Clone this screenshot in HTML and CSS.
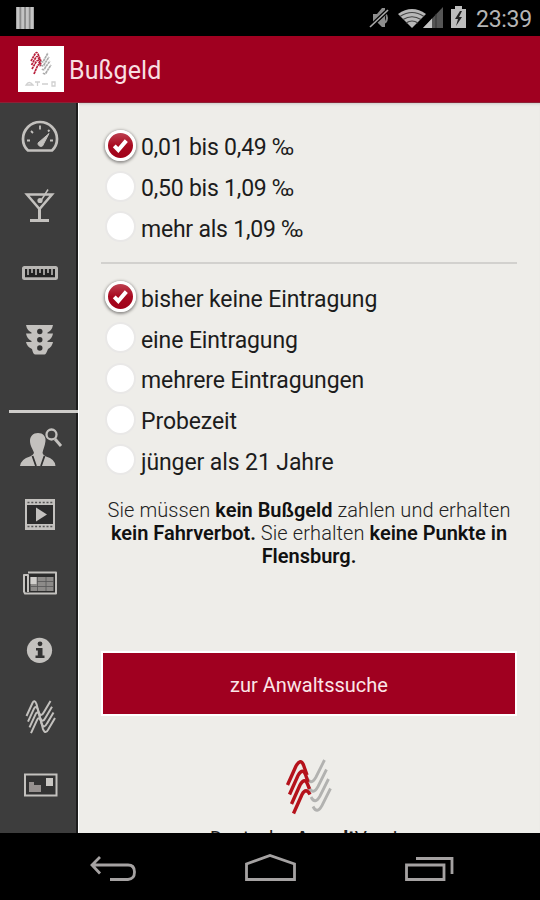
FILE: index.html
```html
<!DOCTYPE html>
<html lang="de">
<head>
    <meta charset="UTF-8">
    <meta name="viewport" content="width=device-width, initial-scale=1.0">
    <title>Bußgeld</title>
    <link rel="stylesheet" href="styles.css">
</head>
<body>
    <div class="statusbar">
        <svg class="bars" width="18" height="22" viewBox="0 0 18 22">
            <rect width="18" height="22" fill="#8c8c8c"/>
            <path d="M2 0v22M6.7 0v22M11.4 0v22M16 0v22" stroke="#c4c4c4" stroke-width="2.8"/>
        </svg>
        <div class="status-right">
            <svg width="102" height="26" viewBox="0 0 102 26">
                <path d="M4 9h4l5-6h3v19h-3l-5-5H4z" fill="#8e8e8e"/>
                <path d="M16 8q4 5 0 10" fill="none" stroke="#8a8a8a" stroke-width="2"/>
                <path d="M1 22L19 5" stroke="#000" stroke-width="4"/>
                <path d="M1 22L19 5" stroke="#a8a8a8" stroke-width="1.7"/>
                <path d="M29 9Q43 -1 57 9L43 23z" fill="#b8b8b8"/>
                <path d="M31 11.500Q43 3.500 55 11.500M34 14.500Q43 9 52 14.500M37 18Q43 14 49 18" fill="none" stroke="#444" stroke-width="1.1"/>
                <path d="M54 23L74 2V23z" fill="#555"/>
                <path d="M54 23L63 13.500V23z" fill="#c4c4c4"/>
                <path d="M67 9v14" stroke="#333" stroke-width="1"/>
                <path d="M82 4h4V1h7v3h4v19H82z" fill="#bdbdbd"/>
                <path d="M91 6l-5 8h3l-2 7 6-9h-3l3-6z" fill="#222"/>
            </svg>
            <span class="clock">23:39</span>
        </div>
    </div>

    <header class="header">
        <svg class="app-icon" width="46" height="46" viewBox="0 0 46 46">
            <rect width="46" height="46" fill="#fff"/>
            <g fill="none" stroke-width="1.700" stroke-dasharray="2.500 .5">
                <path d="M13 15L17 8Q18.500 5 20 8L23 15M13.500 19L17.500 12Q19 9 20.500 12L23 18M14 23L18 16Q19.500 13 21 16L23 20M16 28L19 21Q20.500 17 22 20" stroke="#b8203c"/>
                <path d="M23 15Q25 17 26 14L30 7M23 19Q25 21 26.500 18L31 11M24 23Q26 25 27.500 21L32 15M25 27Q27 29 28.500 26L33 19" stroke="#aaa"/>
            </g>
            <path d="M8 39q3-5 7 0zM17 36h5M19.500 36v4M24 38h6M34 36h3v4h-3z" fill="none" stroke="#d0d0d0" stroke-width="1.300"/>
        </svg>
        <h1>Bußgeld</h1>
    </header>

    <div class="body">
        <nav class="sidebar">
            <div class="item">
                <svg viewBox="0 0 54 54">
                    <path d="M16 39.500Q11 35 11 28A17 17 0 0 1 45 28Q45 35 40 39.500z" fill="none" stroke="#c3c1be" stroke-width="2.700" stroke-linejoin="round"/>
                    <path d="M15 29.500h3M41 29.500h-3M19 20l2 2M28 14.500v4M36 20.500l1.500-1.500" stroke="#c3c1be" stroke-width="1.800"/>
                    <path d="M26 32L37 22.500L30.500 35A3 3 0 0 1 26 32z" fill="#c3c1be" stroke="#c3c1be"/>
                </svg>
            </div>
            <div class="item">
                <svg viewBox="0 0 54 54">
                    <path d="M15 15.500H40L27.500 30z" fill="none" stroke="#c3c1be" stroke-width="2.500"/>
                    <path d="M27.500 29V41M18 41.500H37" stroke="#c3c1be" stroke-width="3"/>
                    <path d="M36 10.500L32 17L28 23" stroke="#c3c1be" stroke-width="1.500" fill="none"/>
                    <circle cx="28" cy="21.500" r="2.600" fill="#c3c1be"/>
                </svg>
            </div>
            <div class="item">
                <svg viewBox="0 0 54 54">
                    <rect x="11.500" y="21.500" width="33" height="11" rx="1" fill="#222" stroke="#b9b7b4" stroke-width="3"/>
                    <path d="M16 23v6M20 23v4M24 23v6M28 23v4M32 23v6M36 23v4M40 23v6" stroke="#b9b7b4" stroke-width="1.600"/>
                    <path d="M13 31.500h30" stroke="#8f8d8b"/>
                </svg>
            </div>
            <div class="item">
                <svg viewBox="0 0 54 54">
                    <path d="M14 12H41Q40 17.500 35.500 19.500V20.500H41Q40 26 35.500 28V29H41Q40 34 36 36Q34 41.500 32.500 41.500H23.500Q21 41.500 20 36Q15 34 14 29H19.500V28Q15 26 14 20.500H19.500V19.500Q15 17.500 14 12z" fill="#c3c1be"/>
                    <g fill="#333"><circle cx="27.800" cy="18.500" r="2.700"/><circle cx="27.800" cy="26.700" r="2.700"/><circle cx="27.800" cy="35" r="2.700"/></g>
                </svg>
            </div>
            <div class="divider"></div>
            <div class="item">
                <svg viewBox="0 0 54 54">
                    <path d="M26 12C31 12 34 15.500 33.500 20C33 25 31 28 30.500 32Q31 34 34 35.500Q43 38 43.500 45H8Q9 38 18 35.500Q21 34 22 32C21 28 18 25 18 20C18 15.500 21 12 26 12z" fill="#c3c1be"/>
                    <path d="M20.500 35L24 45M32.500 35L29 45" stroke="#333" stroke-width="1.800"/>
                    <circle cx="39.500" cy="13.500" r="5" fill="none" stroke="#c3c1be" stroke-width="2.300"/>
                    <path d="M43 18L49 25" stroke="#c3c1be" stroke-width="3"/>
                </svg>
            </div>
            <div class="item">
                <svg viewBox="0 0 54 54">
                    <rect x="14" y="12" width="28" height="29" fill="#2c2c2c" stroke="#c3c1be" stroke-width="2"/>
                    <path d="M14 14.500H42M14 38.500H42" stroke="#c3c1be" stroke-width="5"/>
                    <path d="M15.500 14.500H41M15.500 38.500H41" stroke="#555" stroke-width="1.600" stroke-dasharray="2 1.800"/>
                    <path d="M24 19.500L35 26.500L24 33.500z" fill="#c3c1be"/>
                </svg>
            </div>
            <div class="item">
                <svg viewBox="0 0 54 54">
                    <path d="M16 16.500H44V37.500H13L12 35.500V19H16V36" fill="#2c2c2c" stroke="#c3c1be" stroke-width="2" stroke-linejoin="round"/>
                    <rect x="18.500" y="21" width="23" height="14" fill="#8d8b89"/>
                    <rect x="18.500" y="21" width="6" height="7" fill="#d0cecb"/>
                    <path d="M25.500 21v14M34 21v14M25 25.500h17M18 30.500h24" stroke="#555" stroke-width=".8"/>
                </svg>
            </div>
            <div class="item">
                <svg viewBox="0 0 54 54">
                    <circle cx="27.500" cy="27.300" r="12.600" fill="#c3c1be"/>
                    <circle cx="28" cy="20.800" r="2.400" fill="#333"/>
                    <path d="M24 25H30.500V32.500H32.500V35H23.500V32.500H25.800V27.500H24z" fill="#333"/>
                </svg>
            </div>
            <div class="item">
                <svg viewBox="0 0 54 54">
                    <g fill="none" stroke="#c3c1be" stroke-width="2">
                        <path id="wave" d="M14.500 26L20.500 13Q22.500 9 24.500 14L26.500 22Q29 28 32 22L38.500 11"/>
                        <use href="#wave" x="1.500" y="5.700"/>
                        <use href="#wave" x="3" y="11.400"/>
                        <use href="#wave" x="4.500" y="17.100"/>
                    </g>
                </svg>
            </div>
            <div class="item">
                <svg viewBox="0 0 54 54">
                    <rect x="13" y="16.500" width="31.500" height="21" fill="#333" stroke="#c3c1be" stroke-width="2"/>
                    <path d="M17 24H22V27H29V34H17z" fill="#96918f"/>
                    <rect x="34" y="20" width="7" height="8" fill="#c9c7c3"/>
                </svg>
            </div>
        </nav>

        <main class="content">
            <div class="group">
                <div class="option tight"><span class="radio checked"><svg viewBox="0 0 28 28"><path d="M7 14.500L11.500 19L20.500 8.500"/></svg></span>0,01 bis 0,49 ‰</div>
                <div class="option tight"><span class="radio"></span>0,50 bis 1,09 ‰</div>
                <div class="option tight"><span class="radio"></span>mehr als 1,09 ‰</div>
            </div>
            <hr>
            <div class="group">
                <div class="option"><span class="radio checked"><svg viewBox="0 0 28 28"><path d="M7 14.500L11.500 19L20.500 8.500"/></svg></span>bisher keine Eintragung</div>
                <div class="option"><span class="radio"></span>eine Eintragung</div>
                <div class="option"><span class="radio"></span>mehrere Eintragungen</div>
                <div class="option"><span class="radio"></span>Probezeit</div>
                <div class="option"><span class="radio"></span>jünger als 21 Jahre</div>
            </div>
            <p class="result">Sie müssen <b>kein Bußgeld</b> zahlen und erhalten<br><b>kein Fahrverbot.</b> Sie erhalten <b>keine Punkte in<br>Flensburg.</b></p>
            <button class="search">zur Anwaltssuche</button>
            <div class="logo">
                <svg width="48" height="58" viewBox="0 0 48 58">
                    <g fill="none" stroke="#b2b2b0" stroke-width="2.800">
                        <path id="grey" d="M22 20Q26 28 31 19L39.500 2"/>
                        <use href="#grey" x="2" y="9.500"/>
                        <use href="#grey" x="4" y="19"/>
                        <use href="#grey" x="6" y="28.500"/>
                    </g>
                    <g fill="none" stroke="#b5121b" stroke-width="3.400">
                        <path d="M2.500 27L11 8Q15.500 0 18.500 7L22 17"/>
                        <path d="M4.500 36.500L13 17.500Q17.500 9.500 20.500 16.500L23 24"/>
                        <path d="M6.500 46L15 27Q19.500 19 22.500 26L24.500 31"/>
                        <path d="M8.500 55.500L17 36.500Q21 29 25 36.500"/>
                    </g>
                </svg>
                <div class="logo-text">Deutscher<b>Anwalt</b>Verein</div>
            </div>
        </main>
    </div>

    <footer class="navbar">
        <svg width="540" height="67" viewBox="0 0 540 67" fill="none" stroke="#a5a2a2" stroke-width="2.800">
            <path d="M100 24L92 32L100 40.500M92 32H128Q134.500 32 134.500 39T128 46.500H110"/>
            <path d="M246.500 46.500V31L270 22.500L294.500 31V46.500z"/>
            <path d="M406.500 32H444V46.500H406.500zM416 25.500H452V41"/>
        </svg>
    </footer>
</body>
</html>
```

FILE: styles.css
```css
* {
    box-sizing: border-box;
}
body {
    margin: 0;
    width: 540px;
    height: 900px;
    overflow: hidden;
    display: flex;
    flex-direction: column;
    background: #000;
    font-family: Roboto, sans-serif;
}
svg {
    display: block;
}
.statusbar {
    height: 36px;
    flex: none;
    display: flex;
    justify-content: space-between;
    align-items: center;
    padding: 0 8px 0 16px;
}
.status-right {
    display: flex;
    align-items: center;
    gap: 5px;
}
.clock {
    width: 56px;
    padding-top: 3px;
    color: #b5b5b5;
    font-size: 23px;
    line-height: 33px;
    letter-spacing: -0.3px;
    white-space: nowrap;
}
.header {
    height: 67px;
    flex: none;
    display: flex;
    align-items: center;
    padding-left: 18px;
    gap: 5px;
    background: #a00020;
    border-bottom: 1px solid #8c2136;
}
h1 {
    margin: 0;
    padding-top: 3px;
    font-size: 25px;
    font-weight: 400;
    letter-spacing: 0.1px;
    color: #f7dfe1;
}
.body {
    height: 730px;
    flex: none;
    display: flex;
    overflow: hidden;
}
.sidebar {
    width: 78px;
    flex: none;
    padding-top: 1.6px;
    background: #3d3d3d;
    border-right: 2px solid #1d1d1d;
}
.item {
    height: 67.4px;
    padding: 6.7px 0 0 12px;
}
.item svg {
    width: 54px;
    height: 54px;
}
.divider {
    height: 3px;
    margin: 36px -2px 1px 9px;
    background: #cfcdca;
    position: relative;
}
.content {
    flex: 1;
    padding: 24px 23px 0 22px;
    background: #eeede9;
    border-left: 1px solid #fff;
    box-shadow: inset 0 3px 3px -2px #c9c8c5;
}
.option {
    height: 40.8px;
    display: flex;
    align-items: center;
    padding: 1px 0 0 4px;
    gap: 5px;
    font-size: 23px;
    letter-spacing: -0.1px;
    color: #1c1c1c;
    line-height: 39px;
    white-space: nowrap;
}
.option.tight {
    letter-spacing: -0.22px;
}
.radio {
    width: 31px;
    height: 31px;
    margin-top: -5px;
    flex: none;
    border: 2px solid #e9e8e7;
    border-radius: 50%;
    background: #fff;
}
.radio.checked {
    border: 3px solid #fff;
    background: linear-gradient(#bd4050, #a80a20 50%, #a00018);
    box-shadow: 0 1px 3px 1px #8f8d8b;
}
.radio svg {
    width: 25px;
    height: 25px;
    fill: none;
    stroke: #fff;
    stroke-width: 4.5;
}
hr {
    height: 2px;
    margin: 13px 0 14px;
    border: 0;
    background: #d2d1ce;
}
.result {
    margin: 16.5px -4px 0 -4px;
    font-size: 20px;
    line-height: 23.3px;
    font-weight: 300;
    letter-spacing: 0.1px;
    text-align: center;
    color: #222;
}
.result b {
    font-weight: 600;
    letter-spacing: -0.02px;
    color: #111;
}
.search {
    display: block;
    width: 416px;
    height: 65px;
    margin: 82.5px 0 0;
    padding: 3px 0 0;
    border: 2px solid #fff;
    background: #a00020;
    color: #fbe6e8;
    font-family: Roboto, sans-serif;
    font-size: 20px;
}
.logo {
    margin-top: 42px;
    display: flex;
    flex-direction: column;
    align-items: center;
}
.logo-text {
    margin-top: 11px;
    font-size: 19px;
    line-height: 22px;
    color: #222;
}
.navbar {
    height: 67px;
    flex: none;
}
```
